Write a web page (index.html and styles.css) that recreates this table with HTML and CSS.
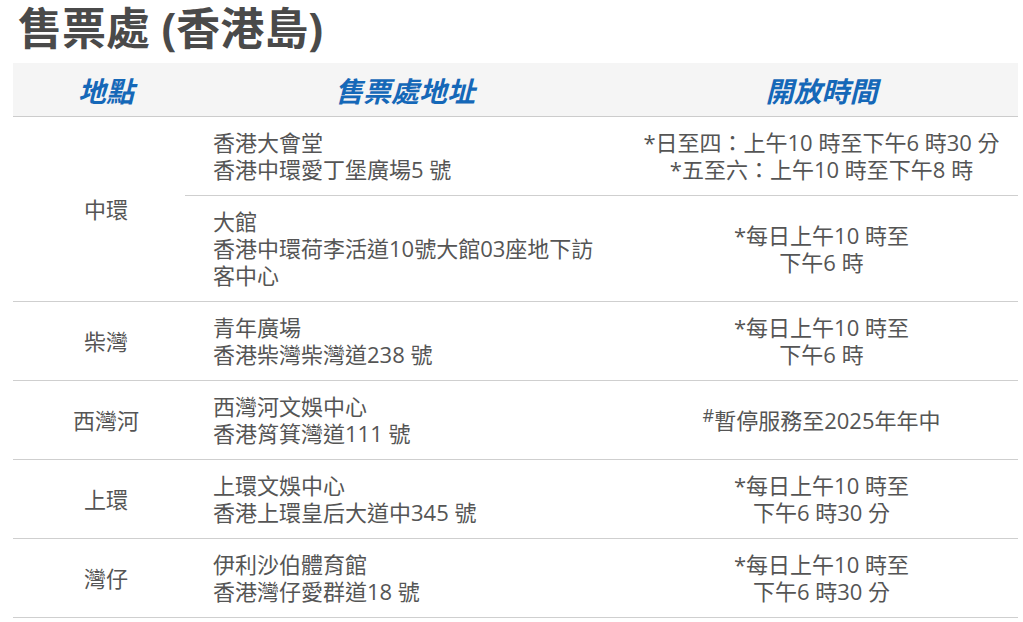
FILE: index.html
```html
<!DOCTYPE html>
<html lang="zh-Hant">
<head>
<meta charset="utf-8">
<link rel="stylesheet" href="styles.css">
</head>
<body>
<div class="page">
  <h1 class="title">售票處 (香港島)</h1>
  <table class="outlets">
    <colgroup>
      <col class="c-loc">
      <col class="c-addr">
      <col class="c-time">
    </colgroup>
    <thead>
      <tr>
        <th class="h-loc">地點</th>
        <th>售票處地址</th>
        <th>開放時間</th>
      </tr>
    </thead>
    <tbody>
      <tr>
        <td class="loc" rowspan="2">中環</td>
        <td class="addr">香港大會堂<br>香港中環愛丁堡廣場5 號</td>
        <td class="time">*日至四：上午10 時至下午6 時30 分<br>*五至六：上午10 時至下午8 時</td>
      </tr>
      <tr>
        <td class="addr">大館<br>香港中環荷李活道10號大館03座地下訪<br>客中心</td>
        <td class="time">*每日上午10 時至<br>下午6 時</td>
      </tr>
      <tr>
        <td class="loc">柴灣</td>
        <td class="addr">青年廣場<br>香港柴灣柴灣道238 號</td>
        <td class="time">*每日上午10 時至<br>下午6 時</td>
      </tr>
      <tr>
        <td class="loc">西灣河</td>
        <td class="addr">西灣河文娛中心<br>香港筲箕灣道111 號</td>
        <td class="time"><sup class="mark">#</sup>暫停服務至2025年年中</td>
      </tr>
      <tr>
        <td class="loc">上環</td>
        <td class="addr">上環文娛中心<br>香港上環皇后大道中345 號</td>
        <td class="time">*每日上午10 時至<br>下午6 時30 分</td>
      </tr>
      <tr>
        <td class="loc">灣仔</td>
        <td class="addr">伊利沙伯體育館<br>香港灣仔愛群道18 號</td>
        <td class="time">*每日上午10 時至<br>下午6 時30 分</td>
      </tr>
    </tbody>
  </table>
</div>
</body>
</html>
```

FILE: styles.css
```css
html, body {
  margin: 0;
  padding: 0;
  background: #ffffff;
}

.page {
  padding: 0 5px 0 13px;
  font-family: "Open Sans", "Noto Sans CJK TC", "Noto Sans", sans-serif;
  color: #555555;
}

.title {
  margin: 0 0 0 5px;
  height: 63px;
  font-size: 44px;
  line-height: 56px;
  font-weight: 700;
  color: #4a4a4a;
  font-family: "Open Sans", "Noto Sans CJK TC", sans-serif;
}

.outlets {
  width: 1005px;
  border-collapse: collapse;
  table-layout: fixed;
}

.c-loc { width: 172px; }
.c-addr { width: 440px; }
.c-time { width: 393px; }

.outlets thead th {
  background: #f5f5f5;
  height: 53px;
  padding: 0;
  font-size: 28px;
  font-weight: 700;
  font-style: italic;
  color: #1568b8;
  text-align: center;
  vertical-align: middle;
  border-bottom: 1px solid #cccccc;
}

.outlets thead th.h-loc {
  padding-left: 14px;
}

.outlets td {
  font-size: 22px;
  line-height: 27px;
  padding: 12px 0;
  border-bottom: 1px solid #cfcfcf;
  vertical-align: middle;
  color: #555555;
}

.outlets td.loc {
  text-align: center;
  padding-left: 14px;
}

.outlets td.addr {
  padding-left: 28px;
  text-align: left;
}

.time {
  text-align: center;
}

.mark {
  font-size: 18px;
  line-height: 0;
  vertical-align: 7px;
}
```
